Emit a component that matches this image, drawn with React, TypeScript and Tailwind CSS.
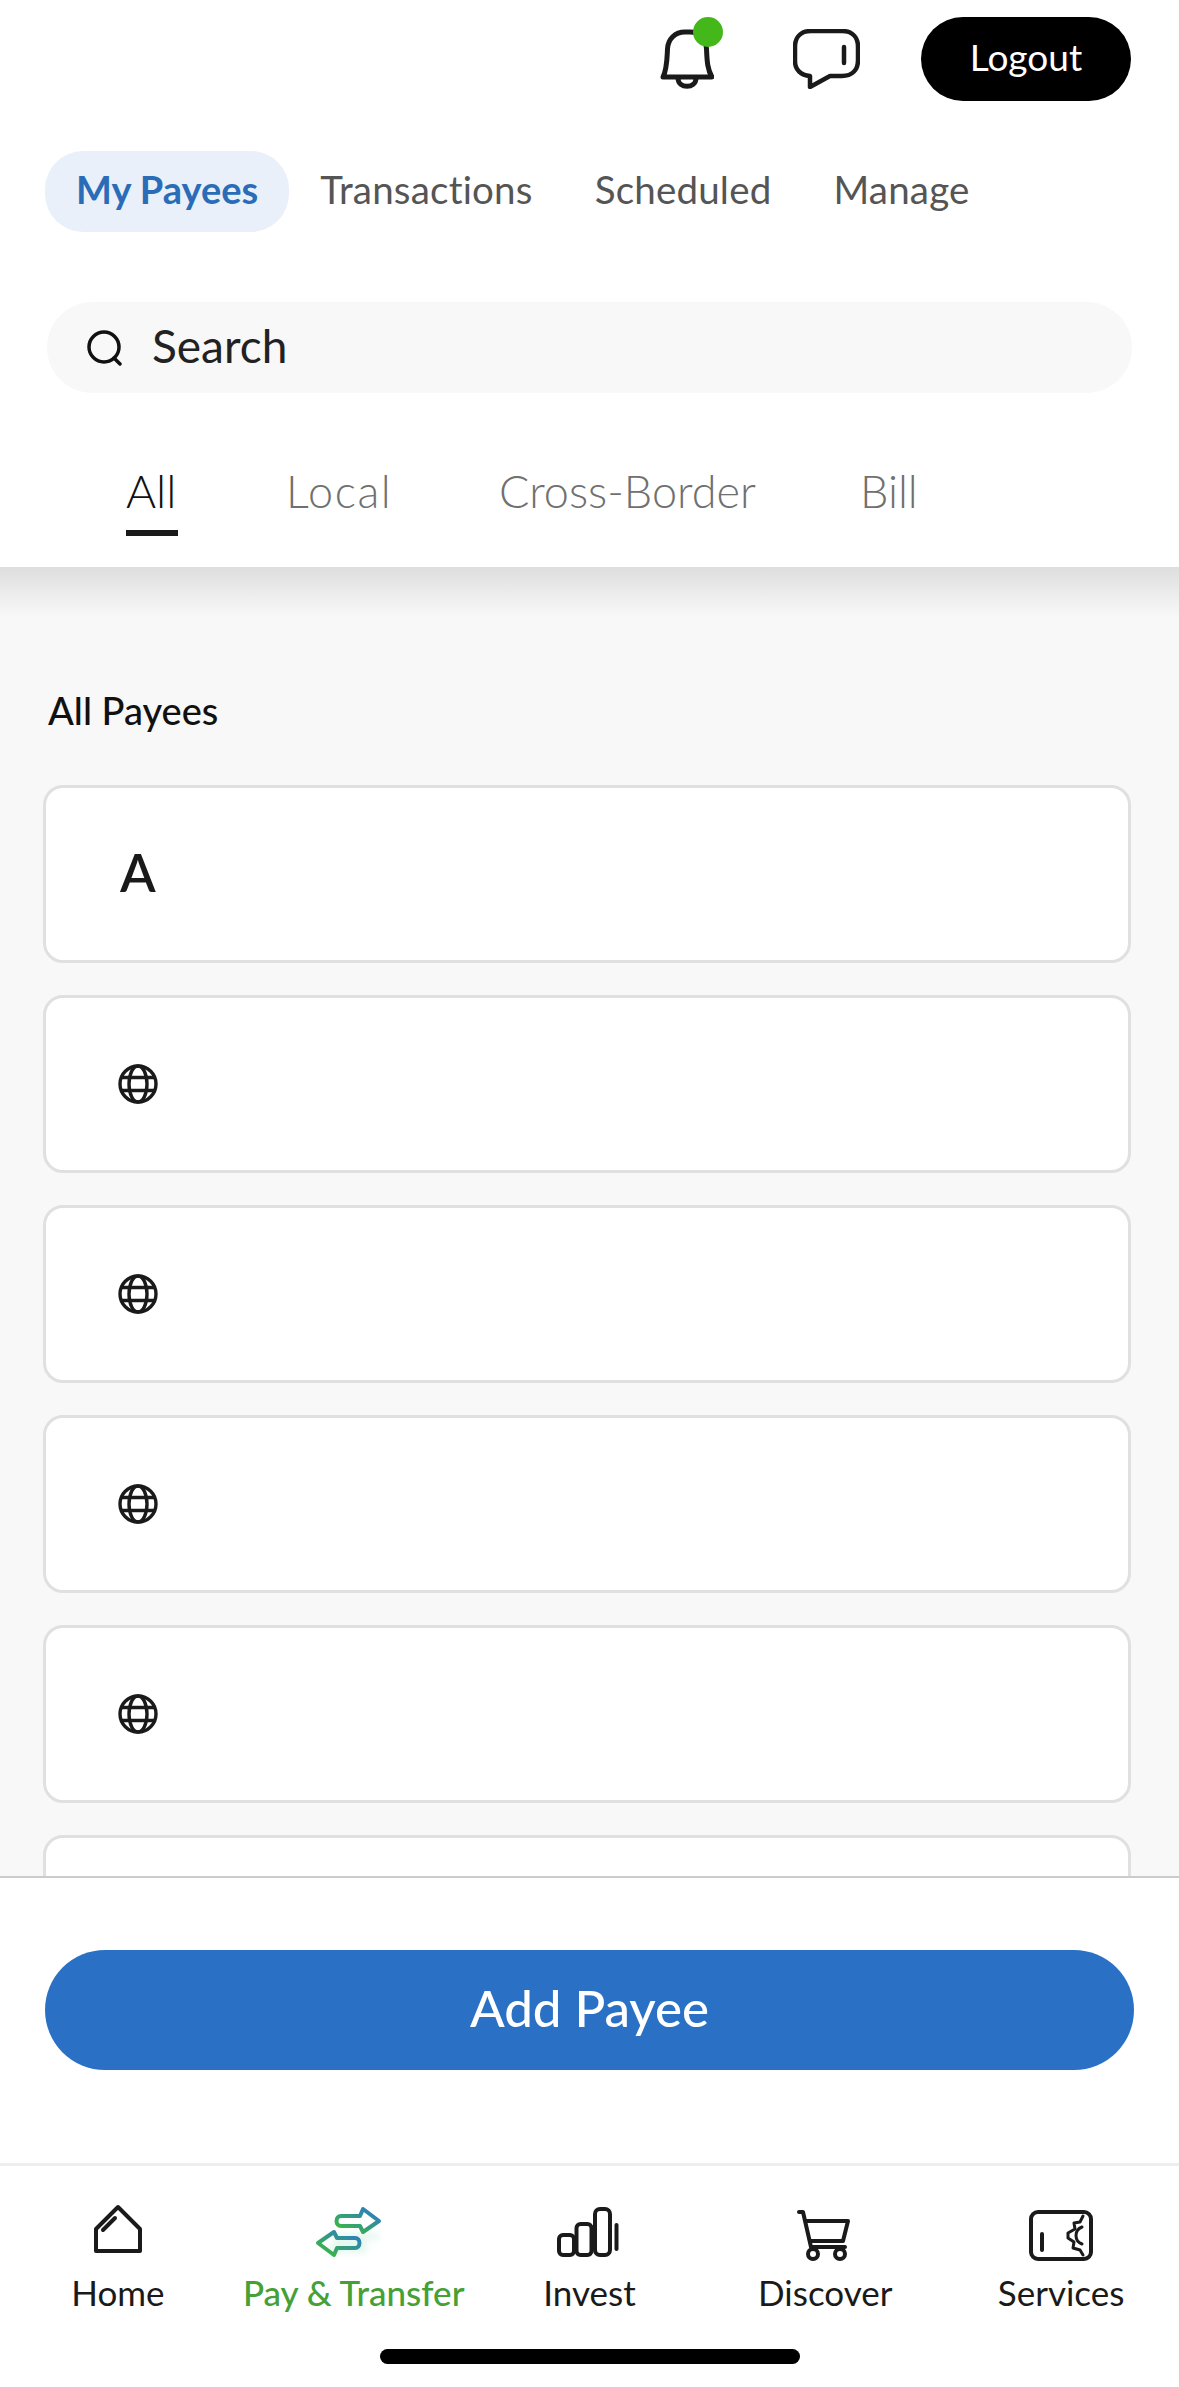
import React from "react";

const topTabs = ["Transactions", "Scheduled", "Manage"];
const subTabs = [
  { label: "Local", width: "w-[105px] tracking-[1.5px]" },
  { label: "Cross-Border", width: "w-[253px]" },
  { label: "Bill", width: "w-[57px]" },
];

const BellIcon = () => (
  <svg width="54" height="60" viewBox="0 0 54 60" fill="none" stroke="#1a1a1a" strokeWidth="5" strokeLinejoin="round" strokeLinecap="round">
    <path d="M3 48 C7 40 7 30 7.500 20 C8 10 15 3 25 3 H30 C39 3 46 10 46.500 20 C47 30 47 40 52 48 Z" />
    <path d="M18 49 C18 60 36 60 36 49" />
  </svg>
);

const ChatIcon = () => (
  <svg width="67" height="60" viewBox="0 0 67 60" fill="none" stroke="#1a1a1a" strokeWidth="4.5" strokeLinejoin="round" strokeLinecap="round">
    <path d="M17 47 C8 46 2 41 2 32 V18 C2 8 8 2 18 2 H49 C59 2 65 8 65 18 V31 C65 41 59 47 49 47 H37 L17 58 Z" />
    <path d="M51 18 V34" />
  </svg>
);

const SearchIcon = () => (
  <svg width="38" height="36" viewBox="0 0 38 36" fill="none" stroke="#111" strokeWidth="3.500" strokeLinecap="round">
    <circle cx="18" cy="17" r="15" />
    <path d="M28 28 L34 34" />
  </svg>
);

const GlobeIcon = () => (
  <svg width="40" height="40" viewBox="0 0 40 40" fill="none" stroke="#1a1a1a" strokeWidth="3.400">
    <circle cx="20" cy="20" r="18" />
    <ellipse cx="20" cy="20" rx="9" ry="18" />
    <path d="M3.500 13.500 H36.500 M3.500 26.500 H36.500" />
  </svg>
);

const HomeIcon = () => (
  <g transform="translate(21 5)">
    <path d="M24 2 L46 24 V46 H2 V24 Z" />
    <path d="M9 25 L21 13" />
  </g>
);

const PayIcon = () => (
  <g>
    <defs>
      <linearGradient id="payGradient" x1="1" y1="0" x2="0" y2="1">
        <stop offset="0" stopColor="#2a78cf" />
        <stop offset="1" stopColor="#3dbd33" />
      </linearGradient>
      <filter id="payGlow" x="-30%" y="-30%" width="160%" height="160%">
        <feGaussianBlur stdDeviation="3" />
      </filter>
    </defs>
    <g transform="translate(-4 -5)">
      <path d="M24 58 H62 V45 H74 V38 H30 V48 H24 Z" fill="#e6f8ef" stroke="none" filter="url(#payGlow)" />
      <g stroke="url(#payGradient)">
        <path d="M36 21 H55 L58 14 L74 26 L58 37 L55 31 H36 C30 31 30 21 36 21 Z" />
        <path d="M13 48 L29 37 L32 43 H50 C56 43 56 53 50 53 H32 L29 60 Z" />
        <path d="M62 43 V52" />
      </g>
    </g>
  </g>
);

const InvestIcon = () => (
  <g transform="translate(4 0)">
    <rect x="11" y="35" width="15" height="20" rx="4" />
    <rect x="28.500" y="24" width="15" height="31" rx="4" />
    <rect x="47" y="9" width="15" height="46" rx="5" />
    <path d="M68.500 25 V49" />
  </g>
);

const CartIcon = () => (
  <g transform="translate(5 0)">
    <path d="M14 12 H18 L26 47 H60" />
    <path d="M22 21 H63 L58 41 H25" />
    <circle cx="28" cy="54" r="5" />
    <circle cx="55" cy="54" r="5" />
  </g>
);

const ServicesIcon = () => (
  <g transform="translate(4 0)">
    <rect x="11" y="12" width="60" height="47" rx="7" />
    <path d="M22 34 V50" />
    <path strokeWidth="3" d="M63 16 L60 22 L54 23 L55 29 L48 33 L48 38 L54 42 L53 48 L60 50 L63 55" />
    <path strokeWidth="3" d="M62 27 C54 30 54 41 62 44" />
  </g>
);

const navItems = [
  { label: "Home", icon: <HomeIcon /> },
  { label: "Pay & Transfer", icon: <PayIcon />, active: true },
  { label: "Invest", icon: <InvestIcon /> },
  { label: "Discover", icon: <CartIcon /> },
  { label: "Services", icon: <ServicesIcon /> },
];

const payees = ["A", "globe", "globe", "globe", "globe", ""];

export default function App() {
  return (
    <div className="flex flex-col h-[2387px] w-full overflow-hidden bg-white font-['Lato',sans-serif]">
      {/* Header */}
      <header className="bg-white">
        <div className="flex items-center justify-end pt-[17px] pr-[48px] h-[101px]">
          <div className="relative mr-[79px]">
            <BellIcon />
            <div className="absolute -top-[12px] left-[33px] w-[30px] h-[30px] rounded-full bg-[#44b71b]"></div>
          </div>
          <div className="mr-[61px]">
            <ChatIcon />
          </div>
          <button className="w-[210px] h-[84px] pb-[4px] rounded-full bg-black text-white text-[37px]">
            Logout
          </button>
        </div>

        <div className="flex mt-[50px] ml-[45px]">
          <div className="flex items-center h-[81px] pb-[4px] px-[31px] rounded-[38px] bg-[#e9f0f9] text-[#2a6cb8] text-[38px] font-bold">
            My Payees
          </div>
          {topTabs.map((tab) => (
            <div key={tab} className="flex items-center h-[81px] pb-[4px] px-[31px] text-[#555555] text-[38.500px] tracking-[0.2px]">
              {tab}
            </div>
          ))}
        </div>

        <div className="flex items-center gap-[28px] h-[91px] mt-[70px] ml-[47px] mr-[47px] pl-[39px] rounded-full bg-[#f8f8f8]">
          <SearchIcon />
          <span className="pb-[4px] text-[46px] text-[#222222]">Search</span>
        </div>

        <div className="flex items-start mt-[69px] pb-[31px] pl-[126px] gap-[108px]">
          <div className="flex flex-col w-[52px]">
            <span className="h-[60px] leading-[58px] text-[46px] font-light text-[#111111]">All</span>
            <div className="h-[6px] mt-[8px] bg-[#1a1a1a]"></div>
          </div>
          {subTabs.map((tab) => (
            <span
              key={tab.label}
              className={`h-[60px] leading-[58px] text-[45px] font-light whitespace-nowrap text-[#707070] ${tab.width}`}
            >
              {tab.label}
            </span>
          ))}
        </div>
      </header>

      {/* Payee list */}
      <main className="flex-1 overflow-hidden bg-[#f8f8f8]">
        <div className="h-[50px] bg-gradient-to-b from-[#dedede] to-[#f8f8f8]"></div>
        <h2 className="mt-[71px] ml-[48px] h-[44px] leading-[44px] text-[38px] font-medium text-[#111111]">
          All Payees
        </h2>
        <div className="flex flex-col gap-[32px] mt-[53px] ml-[43px] w-[1088px]">
          {payees.map((payee, i) => (
            <div
              key={i}
              className="flex items-center shrink-0 h-[178px] pl-[72px] rounded-[20px] border-[3px] border-[#e0e0e0] bg-white"
            >
              {payee === "A" && <span className="ml-[2px] pb-[4px] text-[52px] font-semibold text-[#1a1a1a]">A</span>}
              {payee === "globe" && <GlobeIcon />}
            </div>
          ))}
        </div>
      </main>

      {/* Add payee */}
      <div className="border-t-2 border-[#cccccc] pt-[72px] pb-[93px] pl-[45px] pr-[45px] bg-white">
        <button className="w-full h-[120px] pb-[3px] rounded-full bg-[#2a71c6] text-white text-[51px] font-medium">
          Add Payee
        </button>
      </div>

      {/* Bottom nav */}
      <nav className="border-t-[3px] border-[#eeeeee] pt-[34px] pb-[23px] bg-white">
        <div className="grid grid-cols-5">
          {navItems.map((item) => (
            <div key={item.label} className="flex flex-col items-center">
              <svg
                className="overflow-visible"
                width="90"
                height="60"
                viewBox="0 0 90 60"
                fill="none"
                stroke="#1a1a1a"
                strokeWidth="4"
                strokeLinecap="round"
                strokeLinejoin="round"
              >
                {item.icon}
              </svg>
              <span
                className={`mt-[10px] h-[44px] leading-[44px] text-[35px] whitespace-nowrap ${
                  item.active ? "text-[#45a035] font-medium" : "text-[#1a1a1a]"
                }`}
              >
                {item.label}
              </span>
            </div>
          ))}
        </div>
        <div className="w-[420px] h-[15px] mt-[35px] mx-auto rounded-full bg-black"></div>
      </nav>
    </div>
  );
}
